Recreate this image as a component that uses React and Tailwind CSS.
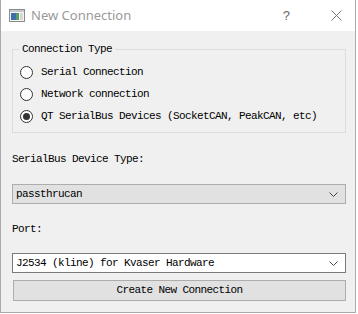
import React, { useState } from 'react';

const mono = { fontFamily: '"Liberation Mono", "DejaVu Sans Mono", monospace' };

const Radio = ({ checked, label, onClick }) => (
  <div className="flex h-[22px] items-center pl-[7px] cursor-default" onClick={onClick}>
    <span className="flex h-[13px] w-[13px] items-center justify-center rounded-full border border-[#333] bg-white">
      {checked && <span className="h-[7px] w-[7px] rounded-full bg-[#333]" />}
    </span>
    <span className="ml-[8px] text-[11px] leading-[14px] tracking-[-0.6px] text-black">{label}</span>
  </div>
);

const Chevron = () => (
  <svg width="9" height="5" viewBox="0 0 9 5" className="mr-[7px]">
    <path d="M0.5 0.5 L4.5 4.5 L8.5 0.5" fill="none" stroke="#444" strokeWidth="1" />
  </svg>
);

const App = () => {
  const [type, setType] = useState(2);
  const types = [
    'Serial Connection',
    'Network connection',
    'QT SerialBus Devices (SocketCAN, PeakCAN, etc)',
  ];

  return (
    <div className="h-[314px] w-[358px] bg-white">
      <div className="flex h-[313px] w-[356px] flex-col border-x border-b border-[#aaa]">
        {/* title bar */}
        <div className="flex h-[31px] shrink-0 items-center bg-white">
          <svg width="16" height="13" viewBox="0 0 16 13" className="ml-[8px]">
            <rect x="0.5" y="0.5" width="15" height="12" fill="#f4f4f4" stroke="#8a8a8a" />
            <rect x="1" y="1" width="14" height="2" fill="#c8c8c8" />
            <rect x="2" y="4" width="5" height="7" fill="#3f6fa8" />
            <rect x="7" y="4" width="3" height="7" fill="#5aa060" />
            <rect x="11" y="4" width="3" height="7" fill="#d8d8d8" />
          </svg>
          <span
            className="ml-[6px] text-[13px] text-[#9a9a9a]"
            style={{ fontFamily: '"Noto Sans", "Liberation Sans", sans-serif' }}
          >
            New Connection
          </span>
          <span
            className="ml-auto text-[13px] text-[#666]"
            style={{ fontFamily: '"Liberation Sans", sans-serif' }}
          >
            ?
          </span>
          <svg width="11" height="11" viewBox="0 0 11 11" className="ml-[41px] mr-[13px]">
            <path d="M0.5 0.5 L10.5 10.5 M10.5 0.5 L0.5 10.5" stroke="#777" strokeWidth="1" />
          </svg>
        </div>

        {/* body */}
        <div className="flex flex-1 flex-col bg-[#f0f0f0] pl-[11px] pr-[9px]" style={mono}>
          <fieldset className="mt-[11px] border border-[#dcdcdc] pb-[5px]">
            <legend className="ml-[6px] px-[3px] text-[11px] leading-[14px] tracking-[-0.6px] text-black">
              Connection Type
            </legend>
            <div className="pt-[5px]">
              {types.map((t, i) => (
                <Radio key={t} label={t} checked={type === i} onClick={() => setType(i)} />
              ))}
            </div>
          </fieldset>

          <div className="mt-[19px] text-[11px] leading-[14px] tracking-[-0.6px] text-black">
            SerialBus Device Type:
          </div>
          <div className="mt-[18px] flex h-[20px] items-center justify-between border border-[#adadad] bg-[#e1e1e1] pl-[3px]">
            <span className="text-[11px] tracking-[-0.6px] text-black">passthrucan</span>
            <Chevron />
          </div>

          <div className="mt-[18px] text-[11px] leading-[14px] tracking-[-0.6px] text-black">Port:</div>
          <div className="mt-[17px] flex h-[20px] items-center justify-between border border-[#7a7a7a] bg-white pl-[3px]">
            <span className="text-[11px] tracking-[-0.6px] text-black">J2534 (kline) for Kvaser Hardware</span>
            <Chevron />
          </div>

          <button className="ml-[1px] mt-[7px] flex h-[21px] items-center justify-center border border-[#adadad] bg-[#e1e1e1] text-[11px] tracking-[-0.6px] text-black">
            Create New Connection
          </button>
        </div>
      </div>
    </div>
  );
};

export default App;
